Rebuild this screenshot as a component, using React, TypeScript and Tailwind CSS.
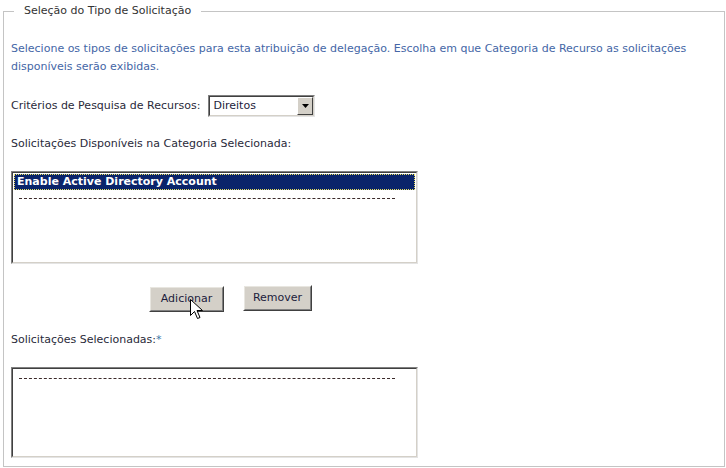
import { FC, ReactNode } from "react";

const font = { fontFamily: '"DejaVu Sans", Verdana, sans-serif' };

// caixa com borda "afundada" estilo Windows clássico
const Inset: FC<{ className?: string; children?: ReactNode }> = ({ className = "", children }) => (
  <div className={`border border-t-[#808080] border-l-[#808080] border-b-[#e4e4e4] border-r-[#e4e4e4] ${className}`}>
    <div className="h-full w-full border border-t-[#404040] border-l-[#404040] border-b-[#d4d0c8] border-r-[#d4d0c8] bg-white">
      {children}
    </div>
  </div>
);

const Button: FC<{ children: ReactNode; className?: string }> = ({ children, className = "" }) => (
  <button className={`h-[26px] border border-t-[#ffffff] border-l-[#ffffff] border-b-[#404040] border-r-[#404040] bg-[#d4d0c8] text-[11px] text-[#1c1c3c] ${className}`}>
    <span className="block h-full w-full border border-t-[#e8e6e0] border-l-[#e8e6e0] border-b-[#808080] border-r-[#808080] leading-[22px]">
      {children}
    </span>
  </button>
);

const Cursor = () => (
  <svg width="13" height="21" viewBox="0 0 13 21" className="absolute left-[41px] top-[14px]">
    <path d="M0.5 0.5 L0.5 16.5 L4.5 12.5 L7.5 19.5 L10 18.5 L7 11.5 L12.5 11.5 Z" fill="white" stroke="black" strokeWidth="1" />
  </svg>
);

const App: FC = () => {
  return (
    <div className="w-[726px] h-[468px] bg-white pl-[3px] pt-[4px]" style={font}>
      <fieldset className="w-[722px] h-[463px] border border-[#c4c4c4] px-[7px]">
        <legend className="ml-[3px] px-[10px] text-[11px] leading-[14px] text-[#333333]">Seleção do Tipo de Solicitação</legend>

        {/* Texto de instrução */}
        <p className="mt-[22px] text-[11px] leading-[18px] text-[#4466a6]">
          Selecione os tipos de solicitações para esta atribuição de delegação. Escolha em que Categoria de Recurso as solicitações disponíveis serão exibidas.
        </p>

        {/* Critérios */}
        <div className="mt-[19px] flex items-center text-[11px] text-[#2a2a3a]">
          <span className="mr-[8px]">Critérios de Pesquisa de Recursos:</span>
          <Inset className="w-[107px] h-[22px]">
            <div className="flex h-full">
              <span className="flex-1 pl-[3px] leading-[17px] text-[11px] text-[#1c1c3c]">Direitos</span>
              <div className="w-[16px] h-full border border-t-[#ffffff] border-l-[#ffffff] border-b-[#404040] border-r-[#404040] bg-[#d4d0c8] flex items-center justify-center">
                <svg width="7" height="4" viewBox="0 0 7 4"><path d="M0 0 H7 L3.5 4 Z" fill="black" /></svg>
              </div>
            </div>
          </Inset>
        </div>

        <p className="mt-[20px] text-[11px] leading-[14px] text-[#2a2a3a]">Solicitações Disponíveis na Categoria Selecionada:</p>

        {/* Lista de solicitações disponíveis */}
        <Inset className="mt-[20px] w-[407px] h-[93px]">
          <div className="pt-[1px] pl-[1px] pr-[1px]">
            <div className="bg-[#0a246a] outline-1 outline-dotted outline-[#e8e060] -outline-offset-1 px-[3px] text-[11px] leading-[16px] font-bold text-white">
              Enable Active Directory Account
            </div>
            <div className="ml-[5px] mt-[8px] w-[376px] border-t border-dashed border-[#3a2a2a]" />
          </div>
        </Inset>

        {/* Botões */}
        <div className="mt-[21px] flex gap-[19px] pl-[138px]">
          <div className="relative">
            <Button className="w-[75px]">Adicionar</Button>
            <Cursor />
          </div>
          <Button className="w-[69px]">Remover</Button>
        </div>

        <p className="mt-[21px] text-[11px] leading-[14px] text-[#2a2a3a]">
          Solicitações Selecionadas:<span className="text-[#3a7aa8]">*</span>
        </p>

        {/* Lista de solicitações selecionadas */}
        <Inset className="mt-[20px] w-[407px] h-[91px]">
          <div className="ml-[6px] mt-[9px] w-[376px] border-t border-dashed border-[#3a2a2a]" />
        </Inset>
      </fieldset>
    </div>
  );
};

export default App;
